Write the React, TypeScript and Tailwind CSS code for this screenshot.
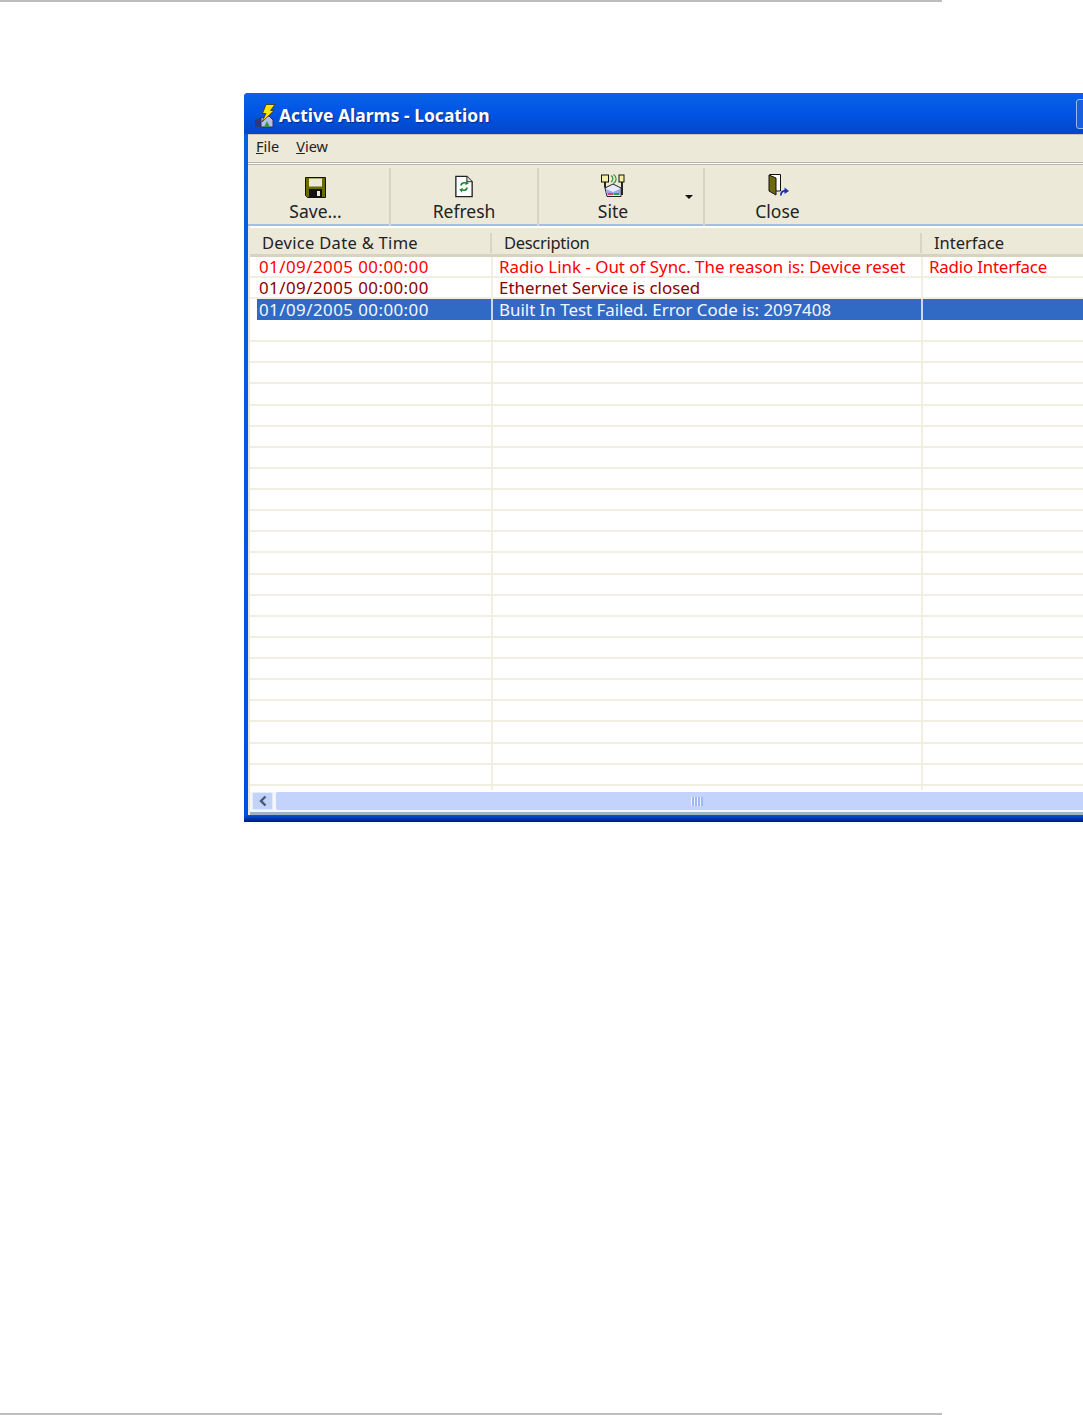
const ROW_COUNT = 22;

const COLS = "grid grid-cols-[243px_430px_1fr]";
const DATE = "01/09/2005 00:00:00";

function SaveIcon() {
  return (
    <svg width="21" height="21" viewBox="0 0 21 21">
      <path d="M0.5 0.5H20.5V20.5H2.5L0.5 18.5Z" fill="#6b6b00" stroke="#111" />
      <rect x="4" y="1.5" width="13" height="8" fill="#ece9d8" />
      <rect x="4" y="12" width="13" height="8" fill="#111" />
      <rect x="12" y="14" width="3" height="5" fill="#ece9d8" />
    </svg>
  );
}

function RefreshIcon() {
  return (
    <svg width="20" height="23" viewBox="0 0 20 24">
      <path d="M1.5 1.5H13L18.5 7V22.5H1.5Z" fill="#fff" stroke="#222" strokeWidth="1.4" />
      <path d="M13 1.5V7H18.5" fill="#ddd" stroke="#222" />
      <path d="M6 11C6 8 9 6.5 12 7.5L12 5.5L15 9L11 10.5L11.5 9C9.5 8.5 8 9.5 8 11Z" fill="#1c8a2e" />
      <path d="M14 13C14 16 11 17.5 8 16.5L8 18.5L5 15L9 13.5L8.5 15C10.5 15.5 12 14.5 12 13Z" fill="#1c8a2e" />
    </svg>
  );
}

function SiteIcon() {
  return (
    <svg width="24" height="24" viewBox="0 0 24 24">
      <path d="M4 8V13L7 16M21 8V21" stroke="#111" strokeWidth="1.8" fill="none" />
      <rect x="0.5" y="1" width="7" height="7" fill="#f5f0a0" stroke="#111" />
      <rect x="18" y="1" width="5" height="7" fill="#f5f0a0" stroke="#111" />
      <path d="M10 1.5C12.5 3 12.5 6.5 10 8M12.5 0.5C16 3 16 7 12.5 9.5" stroke="#2f9e3a" strokeWidth="1.3" fill="none" />
      <path d="M4 14L12 10L20 14V22.5H6Z" fill="#e9ecfb" stroke="#222" />
      <path d="M5 15L12 18L19 15V21H6Z" fill="#9aa8f0" />
      <rect x="7" y="19" width="5" height="2" fill="#e0405a" />
      <rect x="13" y="19" width="5" height="2" fill="#1ca83a" />
    </svg>
  );
}

function CloseIcon() {
  return (
    <svg width="24" height="24" viewBox="0 0 24 24">
      <path d="M3.5 0.5H14.5V17H10" fill="#fff" stroke="#111" />
      <path d="M3 1L10 4V21L3 17Z" fill="#6f6a10" stroke="#111" />
      <path d="M15 21.5C14.5 18 17 16.5 20 17" stroke="#1c2fb0" strokeWidth="1.8" fill="none" />
      <path d="M18.5 13.5L23 17L18.5 20Z" fill="#1c2fb0" />
    </svg>
  );
}

function AlarmIcon() {
  return (
    <svg width="23" height="24" viewBox="0 0 23 24">
      <path d="M1 16L8 13V23H1Z" fill="#2c3a78" />
      <path d="M7 14L15 12L19 16V23H7Z" fill="#b9bfe8" stroke="#26307a" />
      <path d="M10 23L13 17L16 23Z" fill="#2f9e3a" />
      <path d="M12 0.5H21L16.5 6.5H20L8 18L12 9.5H8.5Z" fill="#ffe600" stroke="#3a3000" strokeWidth="0.8" />
    </svg>
  );
}

function ToolButton({ width, icon, label, arrow }: { width: string; icon: React.ReactNode; label: string; arrow?: boolean }) {
  return (
    <div className={`${width} relative h-[58px] flex flex-col items-center border-r-2 border-[#d8d5c4] last:border-r-0`}>
      <div className="flex h-[33px] items-end pb-[3px]">{icon}</div>
      <span className="text-[17.5px] leading-[20px] text-[#222]">{label}</span>
      {arrow && <span className="absolute left-[146px] top-[27px] border-x-4 border-t-4 border-x-transparent border-t-[#111]" />}
    </div>
  );
}

export default function App() {
  return (
    <div className="relative h-[1415px] w-[1083px] overflow-hidden bg-white font-['Noto_Sans',sans-serif]">
      <div className="h-[2px] w-[942px] bg-[#bdbdbd]" />

      <div className="ml-[244px] mt-[91px] w-[900px] rounded-tl-[4px] bg-gradient-to-b from-[#0a5fe6] to-[#0050e0]">
        {/* title bar */}
        <div className="flex h-[41px] items-center rounded-tl-[4px] bg-gradient-to-b from-[#0a62e8] via-[#0054e3] to-[#0247c8] pl-[10px] pr-[44px]">
          <div className="flex items-center pt-[4px]">
            <AlarmIcon />
            <span className="ml-[2px] text-[17.5px] font-bold text-white [text-shadow:1px_1px_1px_#0a2a90]">
              Active Alarms - Location
            </span>
          </div>
          <div className="ml-auto h-[30px] w-[24px] rounded-[3px] border border-[#9cb8f0] bg-[#1a5fe0]" />
        </div>

        <div className="ml-[4px] mr-[4px] bg-[#ece9d8]">
          {/* menu */}
          <div className="flex h-[28px] items-center gap-[17px] border-t border-[#c9c7b8] pb-[4px] pl-[8px] text-[14.5px] text-[#222]">
            <span><span className="underline">F</span>ile</span>
            <span><span className="underline">V</span>iew</span>
          </div>
          <div className="h-[3px] border-y border-y-[#b8b6a8] bg-white" />

          {/* toolbar */}
          <div className="flex h-[61px] items-start border-b-2 border-[#a5bde0] pt-[3px]">
            <ToolButton width="w-[143px] pr-[6px]" icon={<SaveIcon />} label="Save..." />
            <ToolButton width="w-[148px]" icon={<RefreshIcon />} label="Refresh" />
            <ToolButton width="w-[166px] pr-[16px]" icon={<SiteIcon />} label="Site" arrow />
            <ToolButton width="w-[145px]" icon={<CloseIcon />} label="Close" />
          </div>

          {/* list */}
          <div className="ml-[2px] bg-white pt-[2px]">
            <div className="grid h-[29px] grid-cols-[242px_430px_1fr] items-center border-b-[3px] border-[#d6d3c2] bg-[#ece9d8] pt-[4px] text-[16.5px] text-[#222]">
              <span className="border-r-2 border-[#d8d5c4] pl-[12px] leading-[20px] tracking-[0.3px]">Device Date &amp; Time</span>
              <span className="border-r-2 border-[#d8d5c4] pl-[12px] leading-[20px] tracking-[-0.3px]">Description</span>
              <span className="pl-[12px] leading-[20px]">Interface</span>
            </div>

            <div className="h-[535px] text-[16.9px]">
              <div className={`${COLS} h-[21px] border-b-2 border-[#f1efe2] leading-[19px] text-[#ff0000]`}>
                <span className="border-r-2 border-[#f1efe2] pl-[9px] tracking-[0.45px]">{DATE}</span>
                <span className="border-r-2 border-[#f1efe2] pl-[6px]">Radio Link - Out of Sync. The reason is: Device reset</span>
                <span className="pl-[6px] tracking-[-0.2px]">Radio Interface</span>
              </div>
              <div className={`${COLS} h-[21px] border-b-2 border-[#f1efe2] leading-[19px] text-[#8b0000]`}>
                <span className="border-r-2 border-[#f1efe2] pl-[9px] tracking-[0.45px]">{DATE}</span>
                <span className="border-r-2 border-[#f1efe2] pl-[6px]">Ethernet Service is closed</span>
                <span />
              </div>
              <div className="ml-[7px] grid h-[21px] grid-cols-[236px_430px_1fr] bg-[#316ac5] leading-[21px] text-[#f4f7ff]">
                <span className="border-r-2 border-[#c9d6ee] pl-[2px] tracking-[0.45px]">{DATE}</span>
                <span className="border-r-2 border-[#c9d6ee] pl-[6px]">Built In Test Failed. Error Code is: 2097408</span>
                <span />
              </div>
              <div className={`${COLS} h-[1px]`}>
                <span className="border-r-2 border-[#f1efe2]" />
                <span className="border-r-2 border-[#f1efe2]" />
              </div>
              {Array.from({ length: ROW_COUNT }, (_, i) => (
                <div key={i} className={`${COLS} h-[21.13px] border-b-2 border-[#f1efe2]`}>
                  <span className="border-r-2 border-[#f1efe2]" />
                  <span className="border-r-2 border-[#f1efe2]" />
                  <span />
                </div>
              ))}
              <div className={`${COLS} h-[4px]`}>
                <span className="border-r-2 border-[#f1efe2]" />
                <span className="border-r-2 border-[#f1efe2]" />
              </div>
            </div>

            {/* scrollbar */}
            <div className="flex h-[20px] items-stretch gap-[3px] bg-[#f3f6fd] pl-[2px]">
              <div className="flex h-[18px] w-[21px] items-center justify-center rounded-[2px] border border-[#e4ebfb] bg-[#c3d3f8]">
                <svg width="10" height="12" viewBox="0 0 10 12">
                  <path d="M7.5 1.5L3 6L7.5 10.5" stroke="#47587f" strokeWidth="2.4" fill="none" />
                </svg>
              </div>
              <div className="flex h-[18px] flex-1 items-center rounded-[2px] bg-[#c3d3fb] pl-[415px]">
                <div className="h-[9px] w-[12px] bg-[repeating-linear-gradient(90deg,#eef3fe_0px,#eef3fe_1px,#9fb6ee_1px,#9fb6ee_3px)]" />
              </div>
            </div>
            <div className="h-[3px] bg-[#9fb2c9]" />
          </div>
        </div>

        <div className="h-[7px] bg-gradient-to-b from-[#0054e3] to-[#001a80]" />
      </div>

      <div className="absolute bottom-0 left-0 h-[2px] w-[942px] bg-[#bdbdbd]" />
    </div>
  );
}
